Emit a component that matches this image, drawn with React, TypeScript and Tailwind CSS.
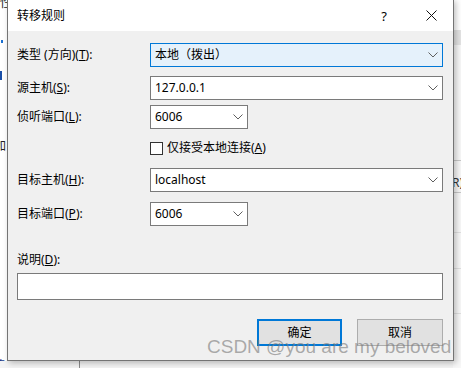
import { ReactNode } from 'react';

const FONT = { fontFamily: '"Noto Sans", "Noto Sans CJK SC", sans-serif' };

// small down chevron used by all combo boxes
function Chevron() {
  return (
    <svg width="10" height="6" viewBox="0 0 10 6" className="shrink-0">
      <polyline points="0.5,0.5 5,5 9.5,0.5" fill="none" stroke="#5f5f5f" strokeWidth="1" />
    </svg>
  );
}

interface ComboProps {
  value: string;
  width: string;
  focused?: boolean;
}

function Combo({ value, width, focused }: ComboProps) {
  return (
    <div
      className={`${width} h-[24px] flex items-center justify-between pl-[4px] pr-[4px] border ${
        focused ? 'border-[#0078d7] bg-[#e5f1fb]' : 'border-[#7a7a7a] bg-white'
      }`}
    >
      <span className="text-[12px] leading-[16px] text-black">{value}</span>
      <Chevron />
    </div>
  );
}

function Label({ children }: { children: ReactNode }) {
  return <span className="w-[133px] shrink-0 text-[12px] leading-[16px] text-black">{children}</span>;
}

function Row({ label, children, className }: { label: ReactNode; children: ReactNode; className: string }) {
  return (
    <div className={`flex items-center ${className}`}>
      <Label>{label}</Label>
      {children}
    </div>
  );
}

export default function App() {
  return (
    <div className="relative w-[461px] h-[368px] overflow-hidden bg-white" style={FONT}>
      {/* background app peeking out behind the dialog */}
      <div className="absolute left-0 top-[-6px] text-[12px] text-[#222]">性</div>
      <div className="absolute left-[1px] top-[40px] w-[2px] h-[3px] bg-[#1a6fd1]" />
      <div className="absolute left-[0px] top-[71px] w-[2px] h-[9px] bg-[#1a4fa8]" />
      <div className="absolute left-[-6px] top-[137px] text-[12px] text-[#222]">加</div>
      <div className="absolute left-[-5px] top-[357px] text-[12px] text-[#1a3a8a]">身</div>
      <div className="absolute left-0 top-[361px] w-[461px] h-[7px] bg-[#f3f3f3]" />
      <div className="absolute left-[79px] top-[358px] w-px h-[10px] bg-[#8a8a8a]" />
      <div className="absolute left-[453px] top-[30px] w-[8px] h-[15px] bg-[#e3e3e3]" />
      <div className="absolute left-[453px] top-[45px] w-[8px] h-[323px] bg-[#f7f7f7]" />
      <div className="absolute left-[453px] top-[160px] w-[8px] h-px bg-[#c8c8c8]" />
      <div className="absolute left-[453px] top-[192px] w-[8px] h-px bg-[#c8c8c8]" />
      <div className="absolute left-[453px] top-[232px] w-[8px] h-px bg-[#e0e0e0]" />
      <div className="absolute left-[453px] top-[268px] w-[8px] h-px bg-[#e0e0e0]" />
      <div className="absolute left-[453px] top-[313px] w-[8px] h-px bg-[#e0e0e0]" />
      <div className="absolute left-[452px] top-[174px] text-[12px] text-[#333]">R)</div>

      {/* dialog window */}
      <div className="absolute left-[7px] top-[-1px] w-[447px] h-[362px] border border-[#747474] bg-[#f0f0f0] shadow-[2px_2px_6px_rgba(0,0,0,0.25)] flex flex-col">
        <div className="h-[31px] bg-white flex items-center pl-[9px] pr-[16px]">
          <span className="text-[12px] leading-[16px] text-black">转移规则</span>
          <span className="ml-auto text-[13px] leading-[16px] text-black mr-[39px]">?</span>
          <svg width="11" height="11" viewBox="0 0 11 11">
            <path d="M0.5 0.5 L10.5 10.5 M10.5 0.5 L0.5 10.5" stroke="#111" strokeWidth="1" />
          </svg>
        </div>

        <div className="flex flex-col pl-[9px]">
          <Row className="mt-[12px]" label={<>类型 (方向)(<u>T</u>):</>}>
            <Combo value="本地（拨出）" width="w-[293px]" focused />
          </Row>
          <Row className="mt-[9px]" label={<>源主机(<u>S</u>):</>}>
            <Combo value="127.0.0.1" width="w-[293px]" />
          </Row>
          <Row className="mt-[5px]" label={<>侦听端口(<u>L</u>):</>}>
            <Combo value="6006" width="w-[98px]" />
          </Row>
          <div className="flex items-center mt-[11px] pl-[133px]">
            <div className="w-[13px] h-[13px] border border-[#333] bg-white" />
            <span className="ml-[4px] text-[12px] leading-[16px] text-black">
              仅接受本地连接(<u>A</u>)
            </span>
          </div>
          <Row className="mt-[12px]" label={<>目标主机(<u>H</u>):</>}>
            <Combo value="localhost" width="w-[293px]" />
          </Row>
          <Row className="mt-[10px]" label={<>目标端口(<u>P</u>):</>}>
            <Combo value="6006" width="w-[98px]" />
          </Row>

          <span className="mt-[26px] text-[12px] leading-[16px] text-black">
            说明(<u>D</u>):
          </span>
          <div className="mt-[5px] w-[426px] h-[27px] border border-[#7a7a7a] bg-white" />

          <div className="mt-[19px] flex justify-end gap-[15px] w-[426px]">
            <button className="w-[85px] h-[27px] border-2 border-[#0078d7] bg-[#e1e1e1] text-[12px] text-black">
              确定
            </button>
            <button className="w-[86px] h-[27px] border border-[#adadad] bg-[#e1e1e1] text-[12px] text-black">
              取消
            </button>
          </div>
        </div>
      </div>

      {/* CSDN watermark */}
      <div
        className="absolute left-[207px] top-[336px] text-[19px] leading-[22px] text-[rgba(120,120,120,0.6)] whitespace-nowrap"
        style={{ fontFamily: '"Liberation Sans", Arial, sans-serif' }}
      >
        CSDN @you are my beloved
      </div>
    </div>
  );
}
